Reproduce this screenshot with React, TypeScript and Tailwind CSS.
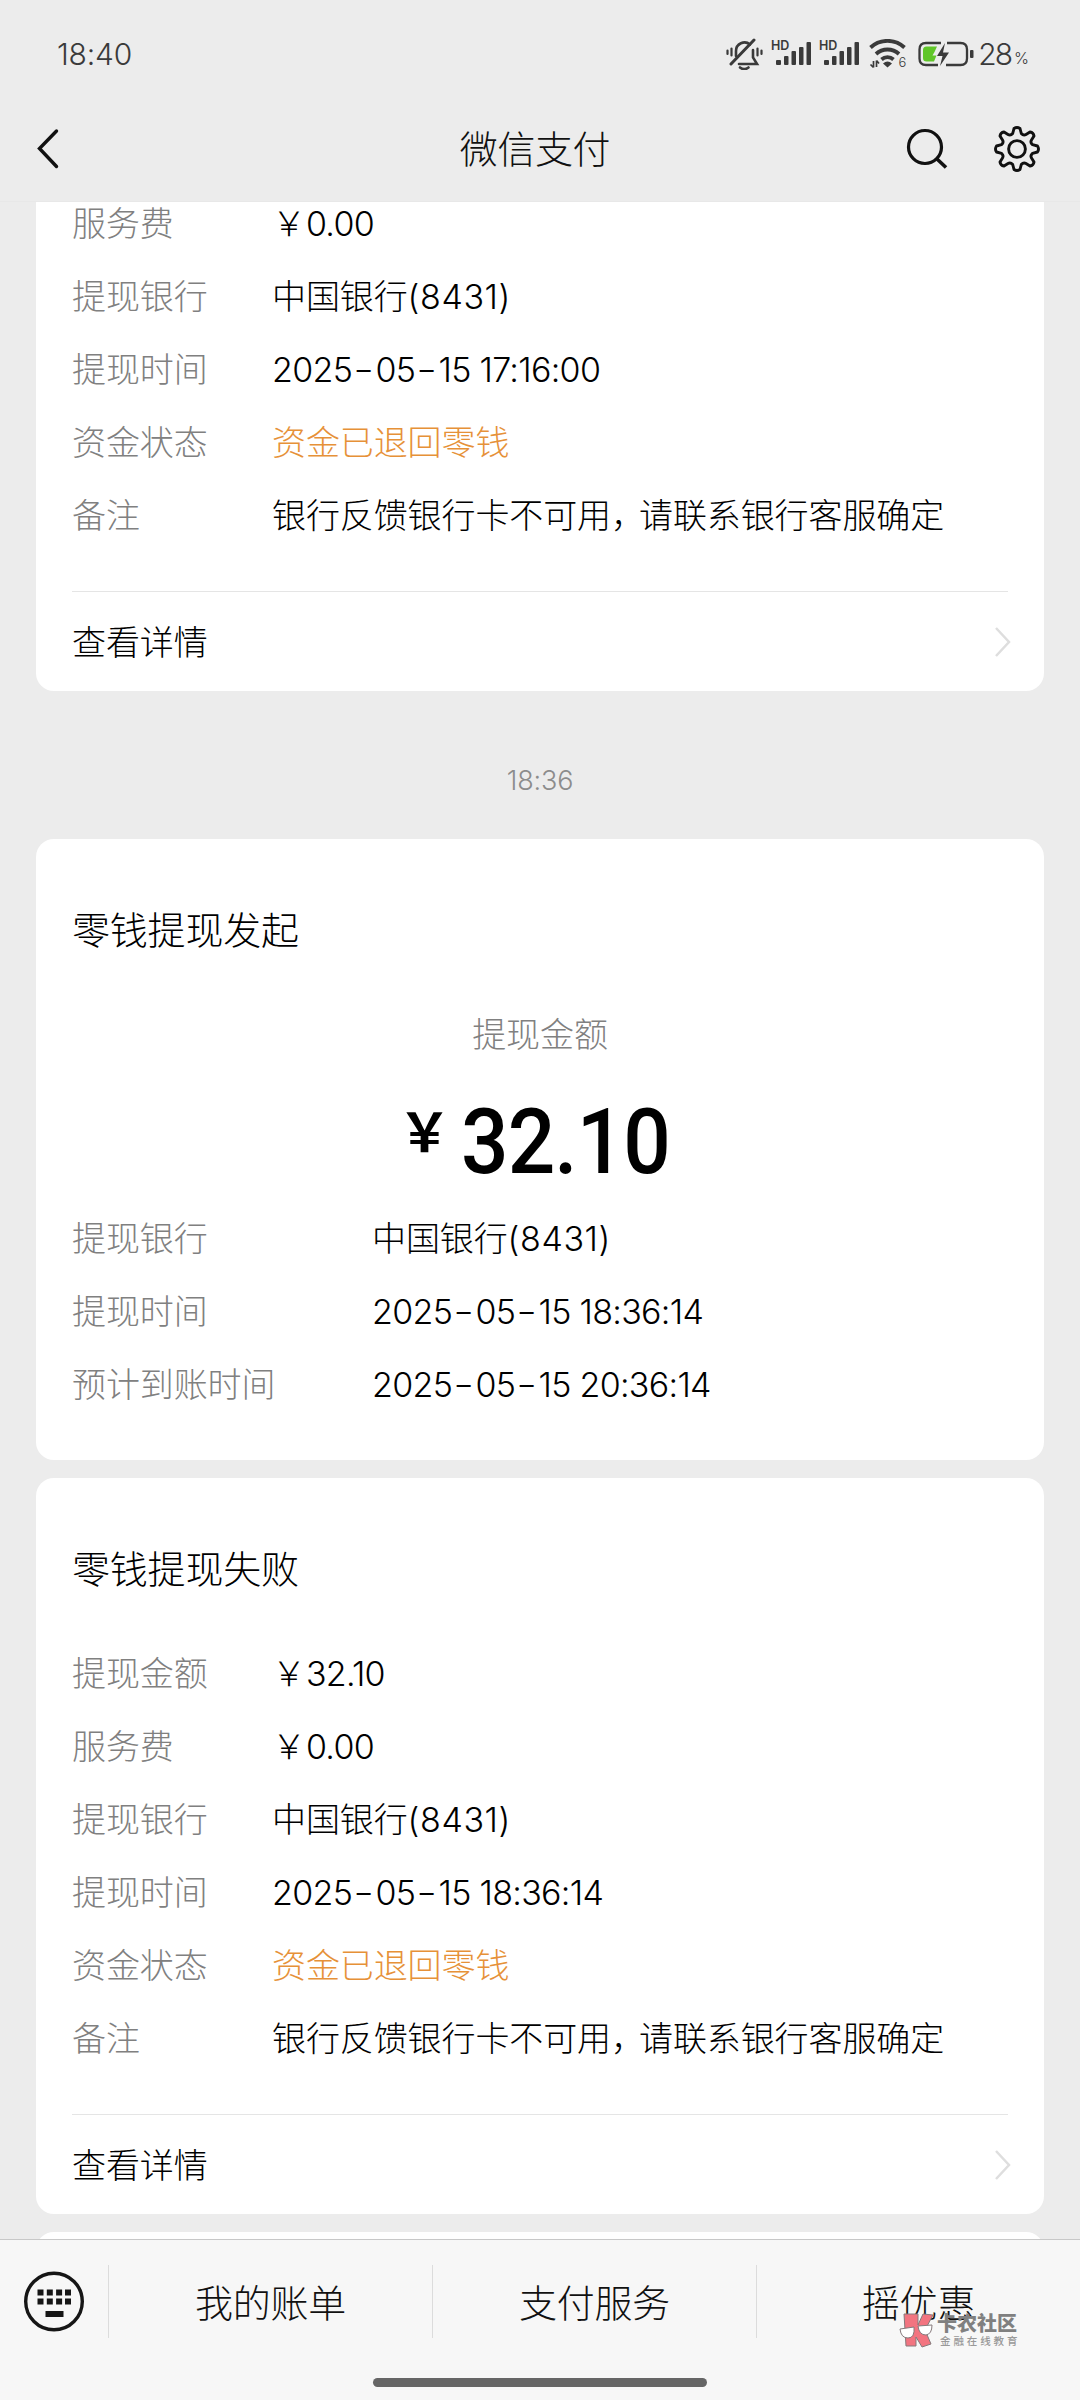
import type { ReactNode } from "react";
import clsx from "clsx";

type Item = { label: string; value: string; warn?: boolean };

const firstItems: Item[] = [
  { label: "服务费", value: "￥0.00" },
  { label: "提现银行", value: "中国银行(8431)" },
  { label: "提现时间", value: "2025-05-15 17:16:00" },
  { label: "资金状态", value: "资金已退回零钱", warn: true },
  { label: "备注", value: "银行反馈银行卡不可用，请联系银行客服确定" },
];

const pendingItems: Item[] = [
  { label: "提现银行", value: "中国银行(8431)" },
  { label: "提现时间", value: "2025-05-15 18:36:14" },
  { label: "预计到账时间", value: "2025-05-15 20:36:14" },
];

const failedItems: Item[] = [
  { label: "提现金额", value: "￥32.10" },
  { label: "服务费", value: "￥0.00" },
  { label: "提现银行", value: "中国银行(8431)" },
  { label: "提现时间", value: "2025-05-15 18:36:14" },
  { label: "资金状态", value: "资金已退回零钱", warn: true },
  { label: "备注", value: "银行反馈银行卡不可用，请联系银行客服确定" },
];

function Signal() {
  return (
    <svg width="42" height="30" viewBox="0 0 42 30" fill="#3a3a3a">
      <text x="0" y="11" fontSize="12.5" fontWeight="600" fontFamily="Inter, sans-serif">
        HD
      </text>
      <rect x="5" y="21" width="5" height="5" rx="1" />
      <rect x="13" y="17" width="4.5" height="9" rx="1" />
      <rect x="20.5" y="12" width="4.5" height="14" rx="1" />
      <rect x="28" y="8" width="4.5" height="18" rx="1" />
      <rect x="35.5" y="3" width="4.5" height="23" rx="1" />
    </svg>
  );
}

function StatusBar() {
  return (
    <div className="flex h-[96px] items-center justify-between pt-3 pr-[51px] pl-[57px] font-['Inter'] text-[#3a3a3a]">
      <span className="text-[30px] leading-none tracking-[-0.2px]">18:40</span>
      <div className="flex items-center">
        <svg width="37" height="32" viewBox="0 0 37 32" fill="none" stroke="#3a3a3a" strokeWidth="2.6" strokeLinecap="round">
          <path d="M10 18v-5a8.5 8.5 0 0 1 14-6.5M27 12v7.5l4 6.5H13" />
          <path d="M5 26L28 2" strokeWidth="3" />
          <path d="M14 29.5c2.5 2 6 2 8.5 0" />
          <path d="M1.5 12.5v3.5M5.5 10.5v7M31.5 10.5v7M35.5 12.5v3.5" strokeWidth="2.2" />
        </svg>
        <div className="ml-2 flex gap-1.5">
          <Signal />
          <Signal />
        </div>
        <svg className="ml-2" width="39" height="30" viewBox="0 0 39 30" fill="none" stroke="#3a3a3a" strokeWidth="3.8">
          <path d="M1.5 8.5a25 25 0 0 1 34 0" />
          <path d="M7 15a17 17 0 0 1 23 0" />
          <path d="M12.5 20.5a9 9 0 0 1 12 0" />
          <path d="M14 24.5q4.5-4 9 0l-4.5 4z" fill="#3a3a3a" stroke="none" />
          <path d="M4.5 22v6.5M7.5 21.5v6.5M1.5 25.5l3 3M7.5 21.5l2.5 3" strokeWidth="1.7" />
          <text x="29.5" y="28" fontSize="13" fontFamily="Inter, sans-serif" fill="#3a3a3a" stroke="none">
            6
          </text>
        </svg>
        <svg className="ml-2.5" width="56" height="30" viewBox="0 0 56 30" fill="none">
          <path
            d="M23 4H8Q1.5 4 1.5 10.5v9Q1.5 26 8 26h12M29 4h13.5Q49 4 49 10.5v9Q49 26 42.5 26H28"
            stroke="#3a3a3a"
            strokeWidth="2.3"
          />
          <path d="M8.5 7.5H19L16.5 13l-2 3.5h4L16 22.5H8.5Q5 22.5 5 19v-8q0-3.5 3.5-3.5z" fill="#60c629" />
          <path d="M27 4L19 17h5.5L22 27l9-13.5h-6z" fill="#3a3a3a" />
          <rect x="52" y="11" width="3.5" height="8" rx="1" fill="#3a3a3a" />
        </svg>
        <span className="ml-1 text-[30px] leading-none tracking-[-2px]">28</span>
        <span className="mt-2 ml-[3px] text-[16px] leading-none">%</span>
      </div>
    </div>
  );
}

function NavBar() {
  return (
    <div className="flex h-[105px] items-center justify-between pr-[40px] pl-[37px]">
      <svg className="w-[110px]" width="110" height="44" viewBox="0 0 110 44" fill="none">
        <path d="M19.5 4L2.5 21.5l17 18" stroke="#111" strokeWidth="3.4" strokeLinecap="round" />
      </svg>
      <h1 className="pl-[17px] text-[38px] leading-none tracking-[-0.4px] text-[#111]">微信支付</h1>
      <div className="flex items-center gap-[46px]">
        <svg width="42" height="44" viewBox="0 0 42 44" fill="none" stroke="#111" strokeWidth="3.2">
          <circle cx="19" cy="20" r="16.5" />
          <path d="M30.5 31.5l9.5 9" strokeWidth="3.6" />
        </svg>
        <svg width="46" height="46" viewBox="-23 -23 46 46" fill="none" stroke="#111" strokeWidth="2.9" strokeLinejoin="round">
          <circle r="8.4" />
          <path d="M-3-20.5Q0-22.5 3-20.5L4.3-15.5Q6.5-13 9-14.5L13-17Q16.5-16.5 17-13L14.5-9Q13-6.5 15.5-4.3L20.5-3Q22.5 0 20.5 3L15.5 4.3Q13 6.5 14.5 9L17 13Q16.5 16.5 13 17L9 14.5Q6.5 13 4.3 15.5L3 20.5Q0 22.5-3 20.5L-4.3 15.5Q-6.5 13-9 14.5L-13 17Q-16.5 16.5-17 13L-14.5 9Q-13 6.5-15.5 4.3L-20.5 3Q-22.5 0-20.5-3L-15.5-4.3Q-13-6.5-14.5-9L-17-13Q-16.5-16.5-13-17L-9-14.5Q-6.5-13-4.3-15.5Z" />
        </svg>
      </div>
    </div>
  );
}

// Digits, dashes and the comma are spaced differently from the Chinese characters
function Value({ text }: { text: string }) {
  return text.split(/([\d.: ]+|\(\d+\)|-|，)/).map((part, i) => {
    if (part === "，") {
      return (
        <span key={i} className="tracking-[-6px]">
          {part}
        </span>
      );
    }
    if (part === "-") {
      return (
        <span key={i} className="mx-1 inline-block scale-x-[1.35]">
          {part}
        </span>
      );
    }
    if (part[0] === "(") {
      return (
        <span key={i} className="tracking-[0.6px]">
          {part}
        </span>
      );
    }
    if (/^\d/.test(part)) {
      return (
        <span key={i} className="tracking-[-0.7px]">
          {part}
        </span>
      );
    }
    return <span key={i}>{part}</span>;
  });
}

function Rows({ items, wide }: { items: Item[]; wide?: boolean }) {
  return (
    <dl>
      {items.map((item) => (
        <div key={item.label} className="flex h-[73px] items-center pt-0.5 text-[34px] leading-none tracking-[-0.1px]">
          <dt className={clsx("shrink-0 text-[#808080]", wide ? "w-[300px]" : "w-[200px]")}>{item.label}</dt>
          <dd className={clsx("whitespace-nowrap", item.warn ? "text-[#e69138]" : "text-black")}>
            <Value text={item.value} />
          </dd>
        </div>
      ))}
    </dl>
  );
}

function DetailLink() {
  return (
    <div className="mt-[40px] flex h-[100px] items-center justify-between border-t border-[#e5e5e5] text-[34px] leading-none text-black">
      <span className="pt-0.5 tracking-[-0.1px]">查看详情</span>
      <svg className="-mr-[4px]" width="18" height="32" viewBox="0 0 18 32" fill="none">
        <path d="M2 2l13 14L2 30" stroke="#dedede" strokeWidth="2.5" />
      </svg>
    </div>
  );
}

function Card({ title, children }: { title?: string; children?: ReactNode }) {
  return (
    <section className="mx-9 rounded-[18px] bg-white px-9">
      {title && (
        <h2 className="flex h-[158px] items-center pt-[23px] text-[38px] leading-none tracking-[-0.2px] text-black">
          {title}
        </h2>
      )}
      {children}
    </section>
  );
}

function BottomBar() {
  return (
    <div className="relative flex h-[161px] shrink-0 flex-col border-t border-[#c8c8c8] bg-[#f7f7f7]">
      <div className="flex h-[122px] items-center">
        <div className="flex w-[108px] justify-center">
          <svg width="62" height="62" viewBox="0 0 62 62" fill="#161616">
            <circle cx="31" cy="31.5" r="28.3" fill="none" stroke="#161616" strokeWidth="3.4" />
            {[14.5, 23.8, 33.1, 42].map((x) => (
              <g key={x}>
                <rect x={x} y="19.5" width="6" height="6" />
                <rect x={x} y="28.5" width="6" height="6" />
              </g>
            ))}
            <rect x="22.5" y="41" width="18" height="6" />
          </svg>
        </div>
        {["我的账单", "支付服务", "摇优惠"].map((name) => (
          <div
            key={name}
            className="flex h-[73px] flex-1 items-center justify-center border-l border-[#dcdcdc] pt-1 text-[38px] leading-none tracking-[-0.2px] text-[#111]"
          >
            {name}
          </div>
        ))}
      </div>
      <div className="mx-auto mt-4 h-[9px] w-[334px] rounded-full bg-[#666]" />
      <Watermark />
    </div>
  );
}

function Watermark() {
  return (
    <div className="absolute top-[72px] left-[899px] flex gap-0.5">
      <svg width="36" height="36" viewBox="0 0 36 36" stroke="#857a7c" strokeWidth="1">
        <path d="M5 2h14v11l5-11 10 1-8 15 6 14-9 3-6-10v9H7z" fill="#f27480" />
        <path d="M1 17l14-2q1 11-6 11Q2 26 1 17zM19 14l14-1q0 9-6 10-7 0-8-9z" fill="#fff" />
      </svg>
      <div className="flex flex-col pt-0.5 text-[#808080]">
        <span className="text-[20px] leading-[20px] font-black">卡农社区</span>
        <span className="pt-0.5 pl-[3px] text-[10.5px] leading-[12px] font-medium tracking-[2.9px] text-[#999]">
          金融在线教育
        </span>
      </div>
    </div>
  );
}

export default function App() {
  return (
    <div className="flex h-[2400px] w-[1080px] flex-col overflow-hidden bg-[#ececec] font-['Inter','Noto_Sans_CJK_SC',sans-serif] font-light">
      <header className="h-[202px] shrink-0 border-b border-[#e8e8e8]">
        <StatusBar />
        <NavBar />
      </header>
      <main className="min-h-0 flex-1 overflow-hidden">
        <div className="-mt-4">
          <Card>
            <Rows items={firstItems} />
            <DetailLink />
          </Card>
        </div>
        <div className="flex h-[148px] items-center justify-center pt-[31px] text-[27px] leading-none tracking-[-0.2px] text-[#8c8c8c]">
          18:36
        </div>
        <div className="flex flex-col gap-[18px]">
          <Card title="零钱提现发起">
            <div className="flex flex-col items-center">
              <span className="pt-[21px] text-[34px] leading-none tracking-[-0.1px] text-[#808080]">提现金额</span>
              <div className="flex h-[149px] items-center pt-[32px] font-['Roboto','Noto_Sans_CJK_SC',sans-serif] font-medium text-black">
                <span className="-ml-[6px] pr-2.5 pb-4 text-[53px] leading-none font-bold">￥</span>
                <span className="-mr-3 origin-left scale-x-[0.92] text-[91px] leading-none tracking-[-1px]">32.10</span>
              </div>
            </div>
            <Rows items={pendingItems} wide />
            <div className="h-[40px]" />
          </Card>
          <Card title="零钱提现失败">
            <Rows items={failedItems} />
            <DetailLink />
          </Card>
          <Card>
            <div className="h-20" />
          </Card>
        </div>
      </main>
      <BottomBar />
    </div>
  );
}
